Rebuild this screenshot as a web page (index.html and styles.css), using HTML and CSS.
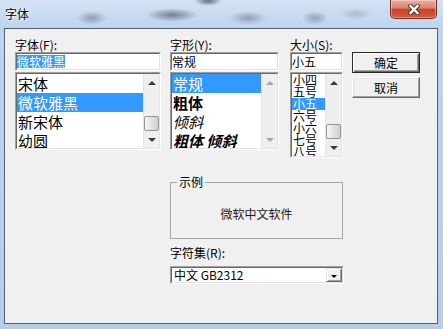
FILE: index.html
```html
<!DOCTYPE html>
<html lang="zh-CN">
  <head>
    <meta charset="UTF-8" />
    <meta name="viewport" content="width=device-width, initial-scale=1.0" />
    <title>字体</title>
    <link rel="stylesheet" href="styles.css">
  </head>
  <body>
    <div class="window">
      <div class="titlebar">
        <span class="title">字体</span>
        <button class="close-btn" aria-label="关闭">
          <svg width="12" height="11" viewBox="0 0 12 11">
            <path d="M2.5 2 L9.5 9 M9.5 2 L2.5 9" stroke="#3a3a3a" stroke-width="4.4" stroke-linecap="square" />
            <path d="M2.5 2 L9.5 9 M9.5 2 L2.5 9" stroke="#ffffff" stroke-width="2.4" stroke-linecap="square" />
          </svg>
        </button>
      </div>

      <div class="client">
        <div class="top-row">
          <div class="col col-font">
            <div class="label">字体(F):</div>
            <div class="sunken edit"><div class="well"><span class="sel">微软雅黑</span></div></div>
            <div class="sunken listbox">
              <div class="well">
                <ul class="items font-items">
                  <li>宋体</li>
                  <li class="selected">微软雅黑</li>
                  <li>新宋体</li>
                  <li>幼圆</li>
                </ul>
                <div class="scrollbar">
                  <div class="arrow up"></div>
                  <div class="track"><div class="thumb"></div></div>
                  <div class="arrow down"></div>
                </div>
              </div>
            </div>
          </div>

          <div class="col col-style">
            <div class="label">字形(Y):</div>
            <div class="sunken edit"><div class="well">常规</div></div>
            <div class="sunken listbox">
              <div class="well">
                <ul class="items style-items">
                  <li class="selected">常规</li>
                  <li class="bold">粗体</li>
                  <li class="italic">倾斜</li>
                  <li class="bold italic">粗体 倾斜</li>
                </ul>
                <div class="scrollbar disabled">
                  <div class="arrow up"></div>
                  <div class="track"></div>
                  <div class="arrow down"></div>
                </div>
              </div>
            </div>
          </div>

          <div class="col col-size">
            <div class="label">大小(S):</div>
            <div class="sunken edit"><div class="well">小五</div></div>
            <div class="sunken listbox">
              <div class="well">
                <ul class="items size-items">
                  <li>小四</li>
                  <li>五号</li>
                  <li class="selected">小五</li>
                  <li>六号</li>
                  <li>小六</li>
                  <li>七号</li>
                  <li>八号</li>
                </ul>
                <div class="scrollbar">
                  <div class="arrow up"></div>
                  <div class="track"><div class="thumb"></div></div>
                  <div class="arrow down"></div>
                </div>
              </div>
            </div>
          </div>

          <div class="col col-buttons">
            <button class="btn default">确定</button>
            <button class="btn">取消</button>
          </div>
        </div>

        <div class="lower">
          <fieldset class="groupbox">
            <legend>示例</legend>
            <div class="sample">微软中文软件</div>
          </fieldset>
          <div class="label charset-label">字符集(R):</div>
          <div class="sunken combo">
            <div class="well">
              <span class="combo-text">中文 GB2312</span>
              <span class="combo-btn"></span>
            </div>
          </div>
        </div>
      </div>
    </div>
  </body>
</html>
```

FILE: styles.css
```css
* {
  box-sizing: border-box;
}

body {
  margin: 0;
  font-family: "Noto Sans CJK SC", sans-serif;
  font-size: 12px;
  color: #000;
}

.window {
  width: 443px;
  height: 329px;
  padding: 0 5px 5px 4px;
  display: flex;
  flex-direction: column;
  background:
    radial-gradient(ellipse 15px 7px at 92px 18px, rgba(105, 115, 132, 0.6), transparent),
    radial-gradient(ellipse 26px 7px at 172px 15px, rgba(80, 88, 104, 0.7), transparent),
    radial-gradient(ellipse 14px 5px at 208px 1px, rgba(55, 62, 78, 0.7), transparent),
    radial-gradient(ellipse 19px 7px at 248px 18px, rgba(105, 115, 132, 0.55), transparent),
    radial-gradient(ellipse 13px 7px at 315px 18px, rgba(105, 115, 132, 0.55), transparent),
    radial-gradient(ellipse 16px 6px at 356px 14px, rgba(130, 140, 158, 0.4), transparent),
    linear-gradient(#d3e3f4, #bcd4ed 30px, #b5cde9);
}

.titlebar {
  height: 28px;
  display: flex;
  justify-content: space-between;
  align-items: flex-start;
}

.title {
  padding: 6px 0 0 1px;
  line-height: 16px;
  font-size: 12px;
  text-shadow: 0 0 4px #fff, 0 0 2px #fff;
}

.close-btn {
  width: 47px;
  height: 19px;
  margin-right: 1px;
  padding: 0;
  border: 1px solid #7a2c20;
  border-top: 0;
  border-radius: 0 0 5px 5px;
  background: linear-gradient(#eab0a2 0%, #de806b 45%, #c9442b 52%, #d35a3e 100%);
  box-shadow: inset 0 0 0 1px rgba(255, 255, 255, 0.35);
  display: flex;
  align-items: center;
  justify-content: center;
}

.client {
  flex: 1;
  border: 1px solid #4e627b;
  background: #f0f0f0;
  padding: 9px 0 0 10px;
}

.top-row {
  display: flex;
  align-items: flex-start;
}

.col-font {
  width: 146px;
}

.col-style {
  width: 109px;
  margin-left: 9px;
}

.col-size {
  width: 53px;
  margin-left: 11px;
}

.col-buttons {
  width: 68px;
  margin-left: 9px;
  padding-top: 14px;
  display: flex;
  flex-direction: column;
}

.label {
  height: 14px;
  line-height: 14px;
  white-space: nowrap;
}

/* classic 3d sunken frame: two lines each side */
.sunken {
  border: 1px solid;
  border-color: #a0a0a0 #fff #fff #a0a0a0;
  background: #fff;
}

.sunken > .well {
  height: 100%;
  border: 1px solid;
  border-color: #696969 #e3e3e3 #e3e3e3 #696969;
}

.edit {
  height: 19px;
  margin-bottom: 1px;
}

.edit .well {
  line-height: 15px;
  white-space: nowrap;
  overflow: hidden;
}

.sel {
  display: inline-block;
  height: 13px;
  line-height: 13px;
  margin-top: 1px;
  vertical-align: top;
  background: #3399ff;
  color: #fff;
}

.listbox {
  height: 78px;
}

.col-size .listbox {
  height: 86px;
}

.listbox .well {
  display: flex;
  overflow: hidden;
}

.items {
  flex: 1;
  margin: 0;
  padding: 0;
  list-style: none;
  overflow: hidden;
}

.items li {
  white-space: nowrap;
  padding-left: 1px;
}

.font-items li,
.style-items li {
  height: 19px;
  line-height: 19px;
  font-size: 15px;
}

.size-items li {
  height: 12px;
  line-height: 12px;
  font-size: 12px;
}

.items li.selected {
  background: #3399ff;
  color: #fff;
}

.items li.bold {
  font-weight: bold;
}

.items li.italic {
  font-style: italic;
}

.scrollbar {
  width: 16px;
  display: flex;
  flex-direction: column;
  background: #efefef;
  border-left: 1px solid #e6e6e6;
}

.arrow {
  height: 17px;
  display: flex;
  align-items: center;
  justify-content: center;
}

.arrow::before {
  content: "";
  border-left: 4px solid transparent;
  border-right: 4px solid transparent;
}

.arrow.up::before {
  border-bottom: 4px solid #3c3c3c;
}

.arrow.down::before {
  border-top: 4px solid #3c3c3c;
}

.scrollbar.disabled .arrow.up::before {
  border-bottom-color: #a8a8a8;
}

.scrollbar.disabled .arrow.down::before {
  border-top-color: #a8a8a8;
}

.track {
  flex: 1;
  display: flex;
  flex-direction: column;
  justify-content: flex-end;
}

.thumb {
  height: 15px;
  border: 1px solid #959595;
  border-radius: 2px;
  background: linear-gradient(90deg, #f7f7f7, #e2e2e2 50%, #d0d0d0);
}

.btn {
  height: 21px;
  padding: 0;
  font-family: inherit;
  font-size: 12px;
  line-height: 17px;
  background: #f0f0f0;
  border: 1px solid;
  border-color: #fff #696969 #696969 #fff;
  box-shadow: inset -1px -1px 0 #a0a0a0, inset 1px 1px 0 #e3e3e3;
}

.btn + .btn {
  margin-top: 4px;
}

.btn.default {
  border: 1px solid #2b2b2b;
  box-shadow: inset 1px 1px 0 #fff, inset -1px -1px 0 #696969, inset -2px -2px 0 #a0a0a0;
}

.lower {
  margin: 17px 0 0 155px;
  width: 174px;
}

.groupbox {
  margin: 0;
  padding: 0 6px;
  width: 173px;
  min-width: 0;
  border: 1px solid #a5a5a5;
}

.groupbox legend {
  padding: 0 2px;
  line-height: 14px;
  font-size: 12px;
}

.sample {
  height: 49px;
  padding-top: 18px;
  line-height: 14px;
  text-align: center;
  color: #1c1c1c;
}

.charset-label {
  margin-top: 7px;
}

.combo {
  height: 18px;
  margin-top: 6px;
}

.combo .well {
  display: flex;
  align-items: center;
  justify-content: space-between;
}

.combo-text {
  padding-left: 2px;
  line-height: 14px;
  white-space: nowrap;
}

.combo-btn {
  width: 16px;
  height: 14px;
  display: flex;
  align-items: center;
  justify-content: center;
  background: #f0f0f0;
  border: 1px solid;
  border-color: #e3e3e3 #696969 #696969 #e3e3e3;
  box-shadow: inset 1px 1px 0 #fff, inset -1px -1px 0 #a0a0a0;
}

.combo-btn::before {
  content: "";
  margin-top: 2px;
  border-left: 3px solid transparent;
  border-right: 3px solid transparent;
  border-top: 3px solid #000;
}
```
